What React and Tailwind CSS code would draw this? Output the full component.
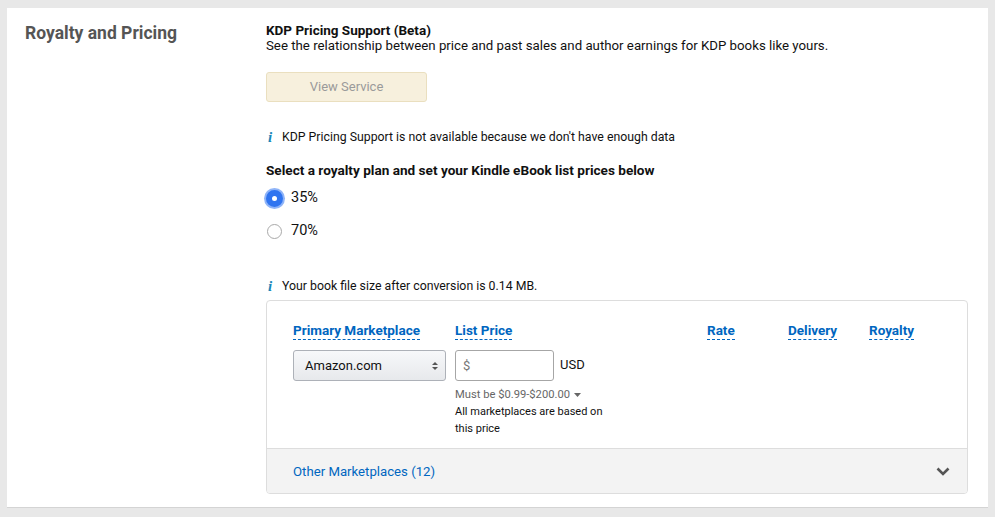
import React from "react";

const font = { fontFamily: 'Roboto, "Noto Sans", Arial, sans-serif' };

function InfoLine({ children, className = "" }) {
  return (
    <div className={"flex items-center h-4 text-[12.3px] leading-4 text-[#111] " + className}>
      <span className="w-[16px] pl-[2px] text-[15px] italic font-bold text-[#1a86b8] font-['Liberation_Serif',serif] leading-4">i</span>
      <span>{children}</span>
    </div>
  );
}

function Radio({ checked, label, className = "" }) {
  return (
    <div className={"flex items-center h-[18px] " + className}>
      {checked ? (
        <span className="w-[17px] h-[17px] rounded-full bg-[#2f74f0] ring-[2px] ring-[#8fb4f8] flex items-center justify-center">
          <span className="w-[5px] h-[5px] rounded-full bg-white" />
        </span>
      ) : (
        <span className="ml-[1px] w-[15px] h-[15px] rounded-full border border-[#a9a9a9] bg-white" />
      )}
      <span className={"text-[14.5px] text-[#111] " + (checked ? "ml-[8px]" : "ml-[9px]")}>{label}</span>
    </div>
  );
}

function Header({ children, w }) {
  return (
    <div className={"text-[13.5px] leading-4 " + w}>
      <span className="font-bold text-[#0066c0] border-b border-dashed border-[#0066c0] pb-[1px]">
        {children}
      </span>
    </div>
  );
}

export default function App() {
  return (
    <div className="w-[995px] h-[517px] bg-[#e8e8e8] pt-[8px] px-[7px]" style={font}>
      <div className="w-[981px] h-[500px] bg-white border-b border-[#d4d4d4] flex">
        <div className="w-[259px] pl-[18px] pt-[13px]">
          <h2 className="text-[17.5px] leading-6 font-bold text-[#555]">Royalty and Pricing</h2>
        </div>
        <div className="flex-1 pt-[14px]">
          <div className="text-[13.5px] leading-4 font-bold text-[#111]">KDP Pricing Support (Beta)</div>
          <div className="text-[13.25px] leading-4 text-[#111]">
            See the relationship between price and past sales and author earnings for KDP books like yours.
          </div>
          <div className="mt-[18px] w-[161px] h-[30px] rounded-[3px] bg-[#f7f0dd] border border-[#eadfbf] flex items-center justify-center text-[13px] text-[#9a9a9a]">
            View Service
          </div>
          <InfoLine className="mt-[27px]">KDP Pricing Support is not available because we don't have enough data</InfoLine>
          <div className="mt-[17px] text-[13.6px] leading-4 font-bold text-[#111]">
            Select a royalty plan and set your Kindle eBook list prices below
          </div>
          <Radio checked label="35%" className="mt-[11px]" />
          <Radio label="70%" className="mt-[15px]" />
          <InfoLine className="mt-[38px]">Your book file size after conversion is 0.14 MB.</InfoLine>
          <div className="mt-[6px] w-[702px] h-[194px] border border-[#dddddd] rounded-[4px] flex flex-col overflow-hidden">
            <div className="flex-1 pl-[26px] pt-[21px]">
              <div className="flex">
                <Header w="w-[162px]">Primary Marketplace</Header>
                <Header w="w-[252px]">List Price</Header>
                <Header w="w-[81px]">Rate</Header>
                <Header w="w-[81px]">Delivery</Header>
                <Header w="w-[81px]">Royalty</Header>
              </div>
              <div className="flex mt-[12px]">
                <div className="w-[162px]">
                  <div className="w-[153px] h-[31px] rounded-[3px] border border-[#adb1b8] bg-gradient-to-b from-[#f7f8fa] to-[#e7e9ec] flex items-center justify-between pl-[11px] pr-[6px] text-[13px] text-[#111]">
                    <span>Amazon.com</span>
                    <svg width="8" height="10" viewBox="0 0 8 10">
                      <path d="M1 4 L4 1 L7 4 Z" fill="#555" />
                      <path d="M1 6 L4 9 L7 6 Z" fill="#555" />
                    </svg>
                  </div>
                </div>
                <div>
                  <div className="flex items-center">
                    <div className="w-[99px] h-[31px] rounded-[3px] border border-[#a6a6a6] flex items-center pl-[7px] text-[13px] text-[#777]">$</div>
                    <span className="ml-[6px] text-[13px] text-[#111] -mt-[1px]">USD</span>
                  </div>
                  <div className="mt-[5px] text-[11.2px] leading-[17px] text-[#666] flex items-center">
                    Must be $0.99-$200.00
                    <svg className="ml-[4px]" width="7" height="4" viewBox="0 0 7 4">
                      <path d="M0 0 L7 0 L3.5 4 Z" fill="#666" />
                    </svg>
                  </div>
                  <div className="w-[160px] text-[11px] leading-[17px] text-[#111]">All marketplaces are based on this price</div>
                </div>
              </div>
            </div>
            <div className="h-[45px] border-t border-[#dddddd] bg-[#f3f3f3] flex items-center justify-between pl-[26px] pr-[17px]">
              <span className="text-[13.2px] text-[#0066c0] mt-[2px]">Other Marketplaces (12)</span>
              <svg width="14" height="9" viewBox="0 0 14 9">
                <path d="M1.5 1.5 L7 7 L12.5 1.5" stroke="#555" strokeWidth="2.6" fill="none" />
              </svg>
            </div>
          </div>
        </div>
      </div>
    </div>
  );
}
